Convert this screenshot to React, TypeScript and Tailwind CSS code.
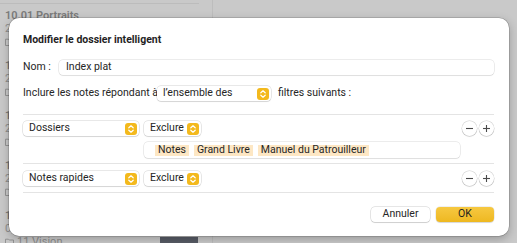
import React from "react";

// Smart folder editor sheet over the notes list

const listItems = [
  { title: "10.01 Portraits", date: "2 oct. 2023", folder: "10 Photos" },
  { title: "10.02 Paysages", date: "2 oct. 2023", folder: "10 Photos" },
  { title: "10.03 Voyages", date: "2 oct. 2023", folder: "10 Photos" },
  { title: "10.04 Famille", date: "2 oct. 2023", folder: "10 Photos" },
  { title: "10.05 Archives", date: "0 jours", folder: "11 Vision" },
];

const Stepper: React.FC = () => (
  <svg width="12" height="12" viewBox="0 0 12 12" className="shrink-0">
    <rect x="0" y="0" width="12" height="12" rx="3" fill="#f3b91d" />
    <path d="M3.8 4.8 L6 2.8 L8.2 4.8" fill="none" stroke="#fff" strokeWidth="1.2" strokeLinecap="round" strokeLinejoin="round" />
    <path d="M3.8 7.2 L6 9.2 L8.2 7.2" fill="none" stroke="#fff" strokeWidth="1.2" strokeLinecap="round" strokeLinejoin="round" />
  </svg>
);

const Popup: React.FC<{ label: string; className: string }> = ({ label, className }) => (
  <div
    className={`flex h-[15px] shrink-0 items-center justify-between rounded-[4px] bg-white pl-[6px] pr-[2px] shadow-[0_0_0_0.5px_rgba(0,0,0,0.18),0_1px_1px_rgba(0,0,0,0.08)] ${className}`}
  >
    <span className="whitespace-nowrap text-[10.5px] leading-none text-[#262626]">{label}</span>
    <Stepper />
  </div>
);

const RoundBtn: React.FC<{ plus?: boolean }> = ({ plus }) => (
  <div className="flex h-[15px] w-[15px] items-center justify-center rounded-full bg-white shadow-[0_0_0_0.5px_rgba(0,0,0,0.2),0_1px_1px_rgba(0,0,0,0.08)]">
    <svg width="9" height="9" viewBox="0 0 9 9">
      <path d="M1 4.5 H8" stroke="#4a4a4a" strokeWidth="1.1" />
      {plus && <path d="M4.5 1 V8" stroke="#4a4a4a" strokeWidth="1.1" />}
    </svg>
  </div>
);

const Tag: React.FC<{ label: string }> = ({ label }) => (
  <span className="flex h-[11px] items-center whitespace-nowrap bg-[#fde7c4] px-[3px] text-[10.5px] leading-none text-[#262626]">
    {label}
  </span>
);

const FolderIcon: React.FC = () => (
  <svg width="9" height="8" viewBox="0 0 9 8" className="shrink-0">
    <path d="M0.5 1.2 H3.4 L4.2 2 H8.5 V7.5 H0.5 Z" fill="none" stroke="#8d8d8d" strokeWidth="0.9" />
  </svg>
);

export default function App() {
  return (
    <div
      className="relative h-[243px] w-[517px] overflow-hidden bg-[#c9c9c9]"
      style={{ fontFamily: "Roboto, 'Liberation Sans', sans-serif" }}
    >
      {/* Background notes list */}
      <div className="flex h-full">
        <div className="w-[213px] shrink-0 border-r border-[#bdbdbd]">
          <div className="mr-[13px] mt-[3px] h-px bg-[#bcbcbc]" />
          <div className="flex flex-col pl-[5px] pt-[5px]">
            {listItems.map((it) => (
              <div key={it.title} className="flex h-[50px] flex-col whitespace-nowrap">
                <div className="h-[13px] text-[11px] font-semibold leading-[13px] text-[#7b7b7b]">{it.title}</div>
                <div className="h-[13px] text-[11px] leading-[13px] text-[#8d8d8d]">{it.date}</div>
                <div className="flex h-[13px] items-center gap-[3px] text-[11px] leading-[13px] text-[#8d8d8d]">
                  <FolderIcon />
                  <span>{it.folder}</span>
                </div>
              </div>
            ))}
          </div>
        </div>
        <div className="flex-1" />
      </div>

      {/* Bottom bar piece */}
      <div className="absolute bottom-0 left-[160px] h-[6px] w-[38px] bg-[#575b65]" />

      {/* Sheet dialog */}
      <div className="absolute left-[9px] top-[18px] flex w-[500px] flex-col whitespace-nowrap rounded-[10px] bg-white pb-[14px] pl-[14px] pr-[15px] pt-[15px] shadow-[0_0_0_0.5px_rgba(0,0,0,0.25),0_3px_10px_rgba(0,0,0,0.25)]">
        <div className="h-[13px] text-[10.5px] font-bold leading-[13px] text-[#1f1f1f]">
          Modifier le dossier intelligent
        </div>

        <div className="mt-[14px] flex h-[15px] items-center">
          <span className="w-[36px] shrink-0 text-[10.5px] leading-none text-[#262626]">Nom :</span>
          <div className="flex h-[15px] flex-1 items-center rounded-[4px] bg-white pl-[7px] shadow-[0_0_0_0.5px_rgba(0,0,0,0.15),0_1px_1px_rgba(0,0,0,0.06)]">
            <span className="text-[10.5px] leading-none text-[#262626]">Index plat</span>
          </div>
        </div>

        <div className="mt-[11px] flex h-[15px] items-center">
          <span className="w-[134px] shrink-0 text-[10.5px] leading-none text-[#262626]">Inclure les notes répondant à</span>
          <Popup label="l’ensemble des" className="w-[114px]" />
          <span className="ml-[7px] text-[10.5px] leading-none text-[#262626]">filtres suivants :</span>
        </div>

        <div className="mt-[13px] h-px bg-[#e4e4e4]" />

        <div className="mt-[6px] flex h-[15px] items-center">
          <Popup label="Dossiers" className="w-[116px]" />
          <Popup label="Exclure" className="ml-[5px] w-[57px]" />
          <div className="flex-1" />
          <div className="flex gap-[2px]">
            <RoundBtn />
            <RoundBtn plus />
          </div>
        </div>

        <div className="mt-[6px] flex h-[16px] items-center pl-[121px] pr-[34px]">
          <div className="flex h-[16px] flex-1 items-center gap-[5px] rounded-[4px] bg-white pl-[11px] shadow-[0_0_0_0.5px_rgba(0,0,0,0.15),0_1px_1px_rgba(0,0,0,0.06)]">
            <Tag label="Notes" />
            <Tag label="Grand Livre" />
            <Tag label="Manuel du Patrouilleur" />
          </div>
        </div>

        <div className="mt-[5px] h-px bg-[#e4e4e4]" />

        <div className="mt-[7px] flex h-[15px] items-center">
          <Popup label="Notes rapides" className="w-[116px]" />
          <Popup label="Exclure" className="ml-[5px] w-[57px]" />
          <div className="flex-1" />
          <div className="flex gap-[2px]">
            <RoundBtn />
            <RoundBtn plus />
          </div>
        </div>

        <div className="mt-[6px] h-px bg-[#e4e4e4]" />

        <div className="mt-[14px] flex h-[15px] justify-end gap-[6px]">
          <div className="flex w-[59px] items-center justify-center rounded-[4px] bg-white text-[10.5px] leading-none text-[#262626] shadow-[0_0_0_0.5px_rgba(0,0,0,0.2),0_1px_1px_rgba(0,0,0,0.1)]">
            Annuler
          </div>
          <div className="flex w-[58px] items-center justify-center rounded-[4px] bg-gradient-to-b from-[#f6c840] to-[#eeb81f] text-[10.5px] leading-none text-[#1f1f1f] shadow-[0_0_0_0.5px_rgba(0,0,0,0.12),0_1px_1px_rgba(0,0,0,0.1)]">
            OK
          </div>
        </div>
      </div>
    </div>
  );
}
